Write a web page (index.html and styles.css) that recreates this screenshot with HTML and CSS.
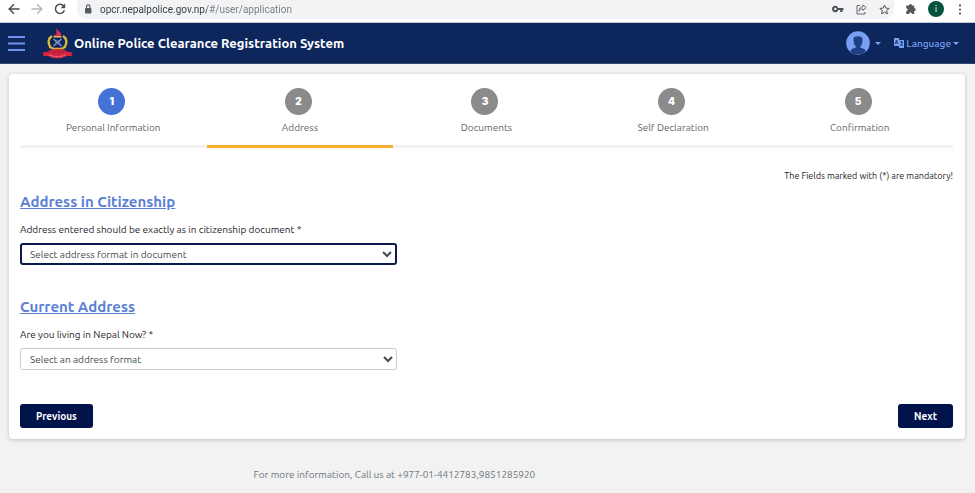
FILE: index.html
```html
<!DOCTYPE html>
<html lang="en">
<head>
  <meta charset="UTF-8">
  <meta name="viewport" content="width=device-width, initial-scale=1.0">
  <title>Online Police Clearance Registration System</title>
  <link rel="stylesheet" href="styles.css">
</head>
<body>
  <!-- Browser toolbar -->
  <div class="toolbar">
    <button class="tool-btn" type="button" aria-label="Back">
      <svg width="12" height="12" viewBox="0 0 12 12" fill="none" stroke="#4a4d51" stroke-width="1.5"><path d="M11.5 6H1.5M6 1.2L1.2 6L6 10.8"/></svg>
    </button>
    <button class="tool-btn" type="button" aria-label="Forward">
      <svg width="12" height="12" viewBox="0 0 12 12" fill="none" stroke="#b4b6b9" stroke-width="1.4"><path d="M.5 6H10.5M6 1.2L10.8 6L6 10.8"/></svg>
    </button>
    <button class="tool-btn" type="button" aria-label="Reload">
      <svg width="12" height="12" viewBox="0 0 12 12"><path d="M9.7 3A4.6 4.6 0 1 0 10.4 7.3" fill="none" stroke="#4a4d51" stroke-width="1.5"/><path d="M11.2.6V5.2H6.6z" fill="#4a4d51"/></svg>
    </button>
    <div class="address-bar">
      <svg width="8" height="10" viewBox="0 0 8 10"><rect x="1" y="4" width="6.4" height="5.6" rx=".8" fill="#55585c"/><path d="M2.5 4.4V2.6a1.7 1.7 0 0 1 3.4 0v1.8" fill="none" stroke="#55585c" stroke-width="1.1"/></svg>
      <input class="url" type="text" aria-label="Address bar" value="opcr.nepalpolice.gov.np/#/user/application">
      <button class="tool-btn" type="button" aria-label="Passwords">
        <svg width="12" height="8" viewBox="0 0 12 8"><path fill="#4f5256" fill-rule="evenodd" d="M3.3.8A3.2 3.2 0 1 0 6.3 5H8.2V7H10.6V5H11.5V2.9H6.3A3.2 3.2 0 0 0 3.3.8zM3.3 2.7A1.2 1.2 0 1 1 3.3 5.1A1.2 1.2 0 0 1 3.3 2.7z"/></svg>
      </button>
      <button class="tool-btn" type="button" aria-label="Share">
        <svg width="11" height="11" viewBox="0 0 11 11" fill="none" stroke="#66696d" stroke-width="1"><path d="M4 1.5H1V10H9V8"/><path d="M7 .9L10.2 3.7L7 6.5V5C5 5 3.7 5.6 2.9 7.3C3.1 4.6 4.5 2.8 7 2.5z"/></svg>
      </button>
      <button class="tool-btn" type="button" aria-label="Bookmark">
        <svg width="11" height="11" viewBox="0 0 11 11"><path d="M5.5 1L6.8 4.1L10.2 4.4L7.6 6.6L8.4 9.9L5.5 8.1L2.6 9.9L3.4 6.6L.8 4.4L4.2 4.1z" fill="none" stroke="#55585c"/></svg>
      </button>
    </div>
    <button class="tool-btn" type="button" aria-label="Extensions">
      <svg width="12" height="12" viewBox="0 0 12 12"><path fill="#55585c" d="M4 2.4a1.5 1.5 0 0 1 3 0H9.2V5a1.5 1.5 0 0 1 0 3.1V11H6.9a1.4 1.4 0 0 0-2.8 0H1.2V8.2a1.4 1.4 0 0 0 0-2.9V2.4z"/></svg>
    </button>
    <button class="profile" type="button" aria-label="Profile">i</button>
    <button class="tool-btn" type="button" aria-label="Menu">
      <svg width="4" height="11" viewBox="0 0 4 11" fill="#55585c"><circle cx="2" cy="1.4" r="1.1"/><circle cx="2" cy="5.5" r="1.1"/><circle cx="2" cy="9.6" r="1.1"/></svg>
    </button>
  </div>

  <header class="navbar">
    <button class="nav-btn" type="button" aria-label="Toggle menu">
      <svg width="17" height="15" viewBox="0 0 17 15" stroke="#6c94ec" stroke-width="2"><path d="M0 1H17M0 7.5H17M0 14H17"/></svg>
    </button>
    <a class="brand" href="#">
      <svg class="logo" width="32" height="32" viewBox="0 0 32 32">
        <path d="M10 9A7.2 7.2 0 0 0 12 22H19A7.2 7.2 0 0 0 21 9" fill="none" stroke="#d9b23a" stroke-width="2.4"/>
        <path d="M8.5 12L7 10.5M7.8 16H6M9 20L7.2 21M22.5 12L24 10.5M23.2 16H25M22 20L23.8 21" stroke="#e8cb5c"/>
        <path d="M11.5 12L19.5 19M19.5 12L11.5 19" stroke="#8fa5cc" stroke-width="1.3"/>
        <circle cx="15.5" cy="15.2" r="2" fill="#7288b5"/>
        <path d="M12.3 9V7L14.4 8.2V1.5L19.5 7L18.5 9z" fill="#df2f4b"/>
        <path d="M11.5 9.8H19.5" stroke="#e8cb5c" stroke-width="1.4"/>
        <path d="M7 23.2Q15.5 20.8 24 23.2V25Q15.5 27 7 25z" fill="#c9203c"/>
        <path d="M0 26L2.5 25L7 24.5Q15.5 27.5 24 24.5L28.5 25L31 26L29.5 27.3L30.5 29H25Q15.5 34 6 29H.8L1.8 27.3z" fill="#d3233f"/>
        <path d="M7 27.8Q15.5 31.4 24 27.8" fill="none" stroke="#f0a5ad" stroke-dasharray="1.5 1"/>
      </svg>
      <span>Online Police Clearance Registration System</span>
    </a>
    <button class="nav-btn user-menu" type="button" aria-label="User menu">
      <svg width="24" height="24" viewBox="0 0 24 24">
        <circle cx="12" cy="12" r="11.8" fill="#78a0f0"/>
        <path d="M7.5 7Q8 5 10.5 5.5Q15 4.6 16.4 7V11Q16 14 14.4 15V16.5L18.8 18.2Q19.5 19.2 19.4 21A11.8 11.8 0 0 1 4.6 21Q4.6 19 5.4 18.2L9.8 16.5V15Q8 14 7.6 11z" fill="#1e3f86"/>
      </svg>
      <span class="caret"></span>
    </button>
    <button class="nav-btn language" type="button">
      <svg width="10" height="10" viewBox="0 0 10 10"><path fill="#78a0f0" d="M0 0H5V2H10V10H5V8H0z"/><path d="M1.2 6L2.5 2L3.8 6M1.7 4.8H3.3M6 4H9M7.5 3V4M6.2 8Q8.2 6.5 8.4 4M6.5 5.5L8.8 8" fill="none" stroke="#0d265c" stroke-width=".8"/></svg>
      <span>Language</span>
      <span class="caret"></span>
    </button>
  </header>

  <main class="card">
    <ol class="steps">
      <li class="step done"><span class="number">1</span><span>Personal Information</span></li>
      <li class="step active"><span class="number">2</span><span>Address</span></li>
      <li class="step"><span class="number">3</span><span>Documents</span></li>
      <li class="step"><span class="number">4</span><span>Self Declaration</span></li>
      <li class="step"><span class="number">5</span><span>Confirmation</span></li>
    </ol>

    <p class="note">The Fields marked with (*) are mandatory!</p>

    <form>
      <section class="field-group">
        <h2>Address in Citizenship</h2>
        <label for="citizenship">Address entered should be exactly as in citizenship document *</label>
        <select id="citizenship" class="focused">
          <option>Select address format in document</option>
        </select>
      </section>

      <section class="field-group">
        <h2>Current Address</h2>
        <label for="current">Are you living in Nepal Now? *</label>
        <select id="current">
          <option>Select an address format</option>
        </select>
      </section>

      <div class="actions">
        <button class="btn" type="button">Previous</button>
        <button class="btn" type="button">Next</button>
      </div>
    </form>
  </main>

  <footer>For more information, Call us at +977-01-4412783,9851285920</footer>
</body>
</html>
```

FILE: styles.css
```css
* {
  box-sizing: border-box;
}

body {
  margin: 0;
  background-color: #f2f2f2;
  color: #1f2328;
  font-family: Ubuntu, "Noto Sans", sans-serif;
  font-size: 10px;
  line-height: 16px;
}

button {
  padding: 0;
  border: 0;
  background: none;
  font-family: inherit;
  cursor: pointer;
}

svg {
  display: block;
  flex-shrink: 0;
}

/* browser toolbar */
.toolbar {
  display: flex;
  align-items: center;
  gap: 11px;
  height: 23px;
  padding: 0 13px 4px 8px;
  background: #fff;
  border-bottom: 1px solid #c3cbd3;
}

.address-bar {
  flex: 1;
  display: flex;
  align-items: center;
  gap: 12px;
  height: 19px;
  padding: 0 4px 0 7px;
  background: #f1f3f4;
  border-radius: 0 0 10px 10px;
}

.url {
  flex: 1;
  min-width: 0;
  padding: 0;
  margin-left: -4px;
  border: 0;
  outline: none;
  font-family: Roboto, sans-serif;
  font-size: 10px;
  color: transparent;
  /* host is darker than the path */
  background: linear-gradient(to right, #35383c 107px, #777a7e 107px);
  -webkit-background-clip: text;
  background-clip: text;
}

.profile {
  width: 16px;
  height: 16px;
  margin-right: 3px;
  border-radius: 50%;
  background: #05523f;
  color: #fff;
  font-size: 10px;
  line-height: 16px;
}

/* navbar */
.navbar {
  display: flex;
  align-items: center;
  height: 41px;
  padding: 0 16px 0 8px;
  background: #0d265c;
  border-bottom: 1px solid #33466f;
}

.brand {
  display: flex;
  align-items: center;
  margin-left: 17px;
  color: #fff;
  font-size: 13px;
  font-weight: 700;
  text-decoration: none;
}

.nav-btn {
  display: flex;
  align-items: center;
  color: #78a0f0;
  font-size: 10px;
  font-weight: 500;
}

.user-menu {
  gap: 5px;
  margin-left: auto;
  margin-right: 13px;
}

.language {
  gap: 2px;
}

.caret {
  border-top: 3px solid #78a0f0;
  border-left: 3px solid transparent;
  border-right: 3px solid transparent;
}

/* card */
.card {
  margin: 10px 10px 0 9px;
  padding: 12px 12px 11px 11px;
  background: #fff;
  border-radius: 4px;
  box-shadow: 0 1px 4px rgba(0, 0, 0, 0.2);
}

.steps {
  display: flex;
  margin: 0;
  padding: 0;
  list-style: none;
}

.step {
  flex: 1;
  display: flex;
  flex-direction: column;
  align-items: center;
  gap: 5px;
  padding: 2px 0 9px;
  border-bottom: 3px solid #f2f2f2;
  color: #666;
}

.step.active {
  border-color: #fbae2b;
}

.number {
  width: 27px;
  height: 27px;
  margin-right: 3px;
  border-radius: 50%;
  background: #8b8b8b;
  color: #fff;
  font-family: Inter, sans-serif;
  font-weight: 900;
  line-height: 27px;
  text-align: center;
}

.done .number {
  background: #4472d6;
}

.note {
  margin: 20px 0 9px;
  font-size: 9px;
  text-align: right;
}

.field-group {
  display: flex;
  flex-direction: column;
  align-items: flex-start;
  margin-bottom: 33px;
}

h2 {
  margin: 0 0 11px;
  color: #5c80d3;
  font-size: 15px;
  font-weight: 600;
  line-height: 18px;
  text-decoration: underline;
}

label {
  margin-bottom: 5px;
}

select {
  width: 377px;
  max-width: 100%;
  height: 22px;
  padding: 0 0 0 5px;
  border: 1px solid #c9cccf;
  border-radius: 3px;
  background: #fff;
  color: #454b52;
  font-family: inherit;
  font-size: 10px;
}

select.focused {
  padding-left: 4px;
  border: 2px solid #0b1c4c;
}

.actions {
  display: flex;
  justify-content: space-between;
  padding-top: 1px;
}

.btn {
  height: 24px;
  padding: 0 16px;
  border-radius: 3px;
  background: #00134a;
  color: #fff;
  font-size: 10px;
  font-weight: 600;
}

footer {
  padding: 28px 0 10px 26%;
  color: #6c757d;
}
```
